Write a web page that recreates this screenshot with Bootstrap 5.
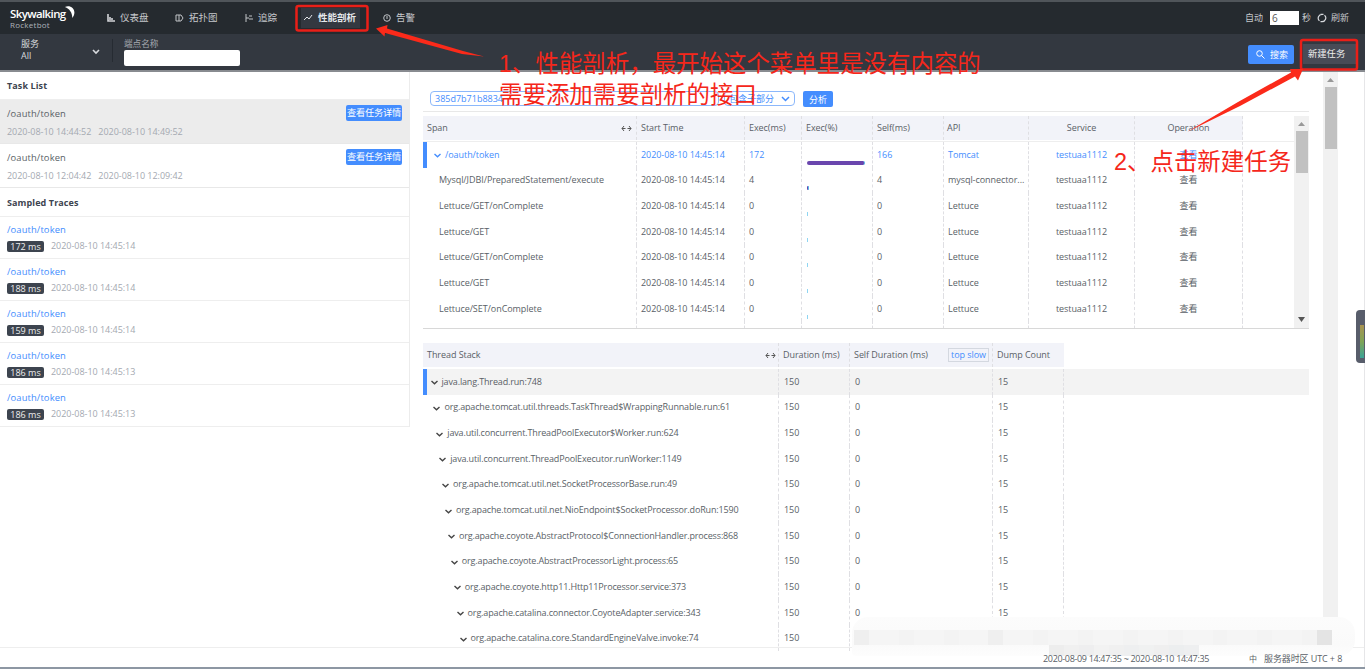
<!DOCTYPE html>
<html lang="zh">
<head>
<meta charset="utf-8">
<title>SkyWalking Rocketbot</title>
<link rel="stylesheet" href="https://cdn.jsdelivr.net/npm/bootstrap@5.3.0/dist/css/bootstrap.min.css">
<style>
body{width:1367px;height:669px;overflow:hidden;background:#fff;font-family:"Open Sans","Noto Sans CJK SC",sans-serif;font-size:9px;line-height:12px;color:#5a5f67}
svg{display:block;flex:none}
.app{width:1365px;height:669px;border-right:1px solid #e6e6e8}
.topbar{height:34px;background:#252a2f;border-top:2px solid #50555a;color:#c6c8cc;width:1365px}
.toolbar{height:38px;background:#333840;border-bottom:2px solid #888b90;color:#d8dade;width:1365px}
.brand{width:96px;padding-left:10px;padding-top:1px}
.logo-a{font-size:11.5px;font-weight:600;line-height:12px;letter-spacing:-.62px;color:#fff}
.logo-b{font-size:8px;line-height:9px;color:#aeb3ba;letter-spacing:.25px}
.menu{font-size:9.5px;height:20px}
.menu svg{margin-right:5px}
.num{width:29px;height:14px;background:#fff;color:#555;font-size:10px;line-height:14px;padding-left:2px}
.fieldbox{width:116px;height:16px;background:#fff;border-radius:2px}
.blue{background:#448dfe;color:#fff;border-radius:2px}
.left{width:410px;height:355px;border-right:1px solid #ececec}
.ttl{height:28px;padding:8px 7px 0;font-weight:700;font-size:9px;letter-spacing:.1px;border-bottom:1px solid #eee;color:#3d444f}
.task{height:44px;padding:8px 7px 0;border-bottom:1px solid #e8e8e8}
.task.sel{background:#ececec}
.task .path,.trace .path{font-size:9.4px;letter-spacing:.12px}
.when{color:#a4a9b1;font-size:9px;letter-spacing:-.03px}
.detail{width:56px;height:16px;font-size:9.2px;line-height:16px;text-align:center;letter-spacing:-.2px;margin-top:-3px;margin-bottom:1px}
.trace{height:42px;padding:7px 7px 0;border-bottom:1px solid #eee}
.trace .path{color:#448dfe}
.ms{width:37px;height:11px;line-height:11px;background:#3d444f;color:#eee;border-radius:2px;text-align:center;font-size:9px}
.right{width:886px;margin-left:13px}
.pill{height:15px;border:1px solid #8cb8fb;border-radius:4px;color:#448dfe;padding:0 4px;background:#fff;font-size:9px;line-height:13px}
.grid1,.grid2{display:grid;position:relative}
.grid1{grid-template-columns:214px 108px 57px 71px 71px 85px 106px 108px}
.grid2{grid-template-columns:356px 71px 143px 71px}
.cellx{border-right:1px dashed #dfdfe3;display:flex;align-items:center;white-space:nowrap;overflow:hidden;padding-left:5px;letter-spacing:-.06px}
.hd .cellx{background:#f2f3f9;height:24px;padding-left:4px}
.rowx .cellx{height:25.65px}
#stack .cellx:first-child{letter-spacing:-.15px}
.hot{color:#448dfe}
.selbar::before{content:"";position:absolute;left:0;top:0;width:4px;height:26px;background:#448dfe;z-index:2}
.bar1{height:4px;border-radius:2px;background:#6a46ae;margin-top:16px;border-right:1px solid #51bdea}
.bar1.zero{background:#8fd5f2;border:0;border-radius:0}
.t1{height:213px;border-bottom:1px solid #d8d8d8;margin-top:4px;overflow:hidden}
.sb{width:15px;background:#f1f1f1}
.thumb{background:#c1c1c1;width:12px;margin:0 auto}
.slow{border:1px solid #d4d8e0;color:#448dfe;height:14px;line-height:11px;padding:0 2px;letter-spacing:-.05px}
.foot{height:21px;padding:5px 0 0 1043px;font-size:9px;border-bottom:2px solid #8d97a3;width:1365px;position:relative;z-index:4}
.overlay{left:0;top:0;z-index:5;pointer-events:none}
.note{position:absolute;z-index:6;color:#f5271b;font-family:"Liberation Sans","Noto Sans CJK SC",sans-serif;font-size:23.45px;line-height:31px;white-space:nowrap}
.meter{position:absolute;left:1356px;top:310px;width:9px;height:53px;background:#585d6b;border-radius:4px 0 0 4px;z-index:4}
.meter i{position:absolute;left:4px;top:15px;width:4px;height:33px;background:linear-gradient(#a99352,#7fa456,#3aa396)}
.mosaic{position:absolute;left:852px;top:617px;width:503px;height:39px;background:linear-gradient(#fcfcfc,#fafafa 70%,#fdfdfd);border-radius:16px 16px 16px 4px;z-index:3;overflow:hidden}
.mosaic .strip{height:15px;width:478px;margin:13px 0 0 2px}
.mosaic .strip2{height:11px;width:150px;margin-left:197px}
</style>
</head>
<body>
<div class="app d-flex flex-column">
  <div class="topbar d-flex align-items-center">
    <div class="brand position-relative">
      <div class="logo-a">Skywalking</div><div class="logo-b">Rocketbot</div>
      <svg class="position-absolute" style="left:64px;top:-2px" width="12" height="15" viewBox="0 0 13 16"><path d="M1 2C8-1 15 6 9 14C9 8 6 4 1 2Z" fill="#fff"/></svg>
    </div>
    <div class="menu d-flex align-items-center" style="width:69px;padding-left:11px"><svg width="8" height="8" viewBox="0 0 8 8"><path d="M1 0V7H8M3 3V6M5 4V6" stroke="#d2d4d8" stroke-width="1.6" fill="none"/></svg>仪表盘</div>
    <div class="menu d-flex align-items-center" style="width:69px;padding-left:10px"><svg width="9" height="8" viewBox="0 0 9 8"><path d="M1 1H4V7H1ZM4 1H6L8 4L6 7H4" stroke="#c2c4c8" fill="none"/></svg>拓扑图</div>
    <div class="menu d-flex align-items-center" style="width:67px;padding-left:11px"><svg width="8" height="8" viewBox="0 0 8 8"><path d="M1 0V8M1 4H4M4 2L7 2M4 5H8" stroke="#c2c4c8" fill="none"/></svg>追踪</div>
    <div class="menu d-flex align-items-center" style="width:59px;padding-left:3px;background:#333840;color:#e6e8ec"><svg width="9" height="8" viewBox="0 0 9 8"><path d="M0 6L3 3L5 5L8 1" stroke="#e2e4e8" fill="none"/></svg><b>性能剖析</b></div>
    <div class="menu d-flex align-items-center" style="padding-left:23px"><svg width="8" height="8" viewBox="0 0 8 8"><circle cx="4" cy="4" r="3.3" stroke="#c2c4c8" fill="none"/><path d="M4 2V5" stroke="#c2c4c8"/></svg>告警</div>
    <div class="ms-auto d-flex align-items-center menu" style="padding-right:16px;font-size:9px">自动<span class="num" style="margin:0 3px 0 7px">6</span>秒<svg style="margin:0 4px 0 6px" width="10" height="10" viewBox="0 0 10 10"><path d="M2.500 7.800A3.700 3.700 0 0 1 5 1.300M7.500 2.200A3.700 3.700 0 0 1 5 8.700M3.500 1.300H6.500M3.500 8.700H6.500" stroke="#d8dade" fill="none" stroke-width="1.200"/></svg>刷新</div>
  </div>
  <div class="toolbar d-flex">
    <div style="width:92px;padding:4px 0 0 21px;line-height:12px">服务<br>All</div>
    <svg style="margin-top:15px" width="8" height="6" viewBox="0 0 8 6"><path d="M1 1L4 4L7 1" stroke="#d8dade" stroke-width="1.6" fill="none"/></svg>
    <div style="width:13px;height:23px;margin-top:5px;border-right:1px solid #262b32"></div>
    <div style="padding:4px 0 0 11px;color:#a5a9af;line-height:12px;font-size:8.6px">端点名称<div class="fieldbox"></div></div>
    <div class="blue ms-auto d-flex align-items-center" style="width:46px;height:19px;margin-top:11px;padding-left:8px"><svg width="9" height="9" viewBox="0 0 9 9" style="margin-right:5px"><circle cx="3.5" cy="3.5" r="2.8" stroke="#fff" fill="none"/><path d="M5.5 5.5L8.5 8.5" stroke="#fff"/></svg>搜索</div>
    <div style="width:53px;height:20px;margin:10px 9px 0 9px;background:#484b56;line-height:20px;padding-left:5px;font-size:9.3px;color:#eee">新建任务</div>
  </div>
  <div class="d-flex" style="height:576px;border-bottom:1px solid #eee">
    <div class="left">
      <div class="ttl">Task List</div>
      <div class="task sel"><div class="d-flex justify-content-between"><span class="path">/oauth/token</span><span class="detail blue">查看任务详情</span></div><div class="when" style="margin-top:4px">2020-08-10 14:44:52<span style="margin-left:7px">2020-08-10 14:49:52</span></div></div>
      <div class="task"><div class="d-flex justify-content-between"><span class="path">/oauth/token</span><span class="detail blue">查看任务详情</span></div><div class="when" style="margin-top:4px">2020-08-10 12:04:42<span style="margin-left:7px">2020-08-10 12:09:42</span></div></div>
      <div class="ttl" style="height:29px;padding-top:9px">Sampled Traces</div>
      <div id="traces"></div>
    </div>
    <div class="right">
      <div class="d-flex" style="height:40px;padding:19px 0 0 7px;border-bottom:1px solid #e8e8e8">
        <div class="pill" style="width:289px">385d7b71b8834</div>
        <div class="pill d-flex align-items-center" style="width:71px;margin-left:5px">包含子部分<svg class="ms-auto" width="9" height="6" viewBox="0 0 9 6"><path d="M1 1L4.500 4.500L8 1" stroke="#448dfe" stroke-width="1.5" fill="none"/></svg></div>
        <div class="blue text-center" style="width:30px;height:16px;line-height:17px;margin-left:8px">分析</div>
      </div>
      <div class="t1 d-flex">
        <div class="flex-fill">
          <div class="grid1 hd"><div class="cellx">Span<svg class="ms-auto me-1" width="11" height="7" viewBox="0 0 11 7"><path d="M3 1L1 3.500L3 6M1 3.500H4.500M8 1L10 3.500L8 6M10 3.500H6.500" stroke="#555" fill="none"/></svg></div><div class="cellx">Start Time</div><div class="cellx">Exec(ms)</div><div class="cellx">Exec(%)</div><div class="cellx">Self(ms)</div><div class="cellx" style="padding-left:3px">API</div><div class="cellx justify-content-center p-0">Service</div><div class="cellx justify-content-center p-0">Operation</div></div>
          <div style="height:2px;border-bottom:1px solid #eee"></div>
          <div id="spans"></div>
        </div>
        <div class="sb d-flex flex-column align-items-center"><svg style="margin-top:6px" width="7" height="4"><path d="M0 4L3.500 0L7 4Z" fill="#999"/></svg><div class="thumb" style="height:42px;margin:5px 0 0"></div><svg style="margin:auto 0 6px" width="7" height="5"><path d="M0 0L3.500 5L7 0Z" fill="#555"/></svg></div>
      </div>
      <div class="grid2 hd" style="margin-top:14px"><div class="cellx">Thread Stack<svg class="ms-auto" style="margin-right:2px" width="11" height="7" viewBox="0 0 11 7"><path d="M3 1L1 3.500L3 6M1 3.500H4.500M8 1L10 3.500L8 6M10 3.500H6.500" stroke="#555" fill="none"/></svg></div><div class="cellx">Duration (ms)</div><div class="cellx">Self Duration (ms)<span class="slow ms-auto" style="margin-right:3px">top slow</span></div><div class="cellx border-end-0" style="padding-left:4px">Dump Count</div></div>
      <div id="stack" style="margin-top:2px"></div>
    </div>
    <div class="sb d-flex flex-column align-items-center" style="margin-left:14px;height:546px"><svg style="margin-top:6px" width="7" height="4"><path d="M0 4L3.500 0L7 4Z" fill="#999"/></svg><div class="thumb" style="height:62px;margin:5px 0 0"></div></div>
  </div>
  <div class="foot d-flex"><span style="width:206px;letter-spacing:-.33px">2020-08-09 14:47:35 ~ 2020-08-10 14:47:35</span><span style="font-size:8px;width:15px">中</span><span style="letter-spacing:-.1px;white-space:nowrap">服务器时区 UTC + 8</span></div>
</div>

<div class="mosaic"><div class="strip d-flex" id="strip"></div><div class="strip2 d-flex" id="strip2"></div></div>
<div class="meter"><i></i></div>
<svg class="overlay position-absolute" width="1367" height="669" viewBox="0 0 1367 669">
  <g fill="none" stroke="#ea1f18" stroke-width="2.500"><rect x="296.500" y="6" width="71" height="24.500" rx="2"/><rect x="1301" y="40" width="56" height="29.500" rx="2"/></g>
  <g fill="#fb2a1a"><path d="M376 28.500L387.500 25L387 28.500L463 51L484 56.500L462 54L385 33L384.500 36.500Z"/><path d="M1303 69L1298 80.500L1295 76.500L1240 106L1187 132L1238 102L1291 72.500L1290 69Z"/></g>
</svg>
<div class="note" style="left:499px;top:49px">1、性能剖析，最开始这个菜单里是没有内容的<br>需要添加需要剖析的接口</div>
<div class="note" style="left:1114px;top:147px">2、点击新建任务</div>

<script>
const fill = (id, rows) => document.getElementById(id).innerHTML = rows.join('');
const chev = c => `<svg width="7" height="5" viewBox="0 0 7 5" style="margin:2px 4px 0 0"><path d="M.5 1L3.500 3.700L6.500 1" stroke="${c}" stroke-width="1.400" fill="none"/></svg>`;
fill('traces', [['172','14:45:14'],['188','14:45:14'],['159','14:45:14'],['186','14:45:13'],['186','14:45:13']].map(([m,t]) =>
 `<div class="trace"><div class="path">/oauth/token</div><div class="d-flex align-items-center" style="margin-top:4px"><span class="ms">${m} ms</span><span class="when" style="margin-left:7px">2020-08-10 ${t}</span></div></div>`));
fill('spans', [['/oauth/token','172','166','Tomcat',58],['Mysql/JDBI/PreparedStatement/execute','4','4','mysql-connector...',2],
 ['Lettuce/GET/onComplete','0','0','Lettuce',1],['Lettuce/GET','0','0','Lettuce',1],['Lettuce/GET/onComplete','0','0','Lettuce',1],['Lettuce/GET','0','0','Lettuce',1],['Lettuce/SET/onComplete','0','0','Lettuce',1],['','','','',0]].map((r,i) =>
 `<div class="grid1 rowx ${i?'':'hot selbar'}"><div class="cellx" style="padding-left:${i?16:11}px">${i?'':chev('#448dfe')}${r[0]}</div><div class="cellx" style="padding-left:4px">${r[0]&&'2020-08-10 14:45:14'}</div><div class="cellx" style="padding-left:4px">${r[1]}</div><div class="cellx"><div class="bar1 ${r[4]<2?'zero':''}" style="width:${r[4]}px"></div></div><div class="cellx" style="padding-left:4px">${r[2]}</div><div class="cellx" style="padding-left:4px">${r[3]}</div><div class="cellx justify-content-center p-0">${r[0]&&'testuaa1112'}</div><div class="cellx justify-content-center p-0">${r[0]&&'查看'}</div></div>`));
fill('stack', ['java.lang.Thread.run:748','org.apache.tomcat.util.threads.TaskThread$WrappingRunnable.run:61','java.util.concurrent.ThreadPoolExecutor$Worker.run:624','java.util.concurrent.ThreadPoolExecutor.runWorker:1149','org.apache.tomcat.util.net.SocketProcessorBase.run:49','org.apache.tomcat.util.net.NioEndpoint$SocketProcessor.doRun:1590','org.apache.coyote.AbstractProtocol$ConnectionHandler.process:868','org.apache.coyote.AbstractProcessorLight.process:65','org.apache.coyote.http11.Http11Processor.service:373','org.apache.catalina.connector.CoyoteAdapter.service:343','org.apache.catalina.core.StandardEngineValve.invoke:74'].map((s,i) =>
 `<div class="grid2 rowx ${i?'':'selbar'}" ${i?'':'style="background:#f3f3f3"'}><div class="cellx" style="padding-left:${7.5+i*2.9}px">${chev('#444')}${s}</div><div class="cellx">150</div><div class="cellx">0</div><div class="cellx">15</div></div>`));
fill('strip', Array.from({length:32}, (_,i) => `<span class="flex-fill" style="background:${i==31?'#e4e4e4':i==0||i==9?'#efefef':i%3?'#f5f5f5':'#f3f3f3'}"></span>`));
fill('strip2', ['#ededed','#f0f0f0','#eeeeef','#f2f2f2','#f0f0f0','#eeeff0','#f0f1f1','#efefef','#eceeef','#eeeff0'].map(c => `<span class="flex-fill" style="background:${c}"></span>`));
</script>
<script src="https://cdn.jsdelivr.net/npm/bootstrap@5.3.0/dist/js/bootstrap.bundle.min.js"></script>
</body>
</html>
